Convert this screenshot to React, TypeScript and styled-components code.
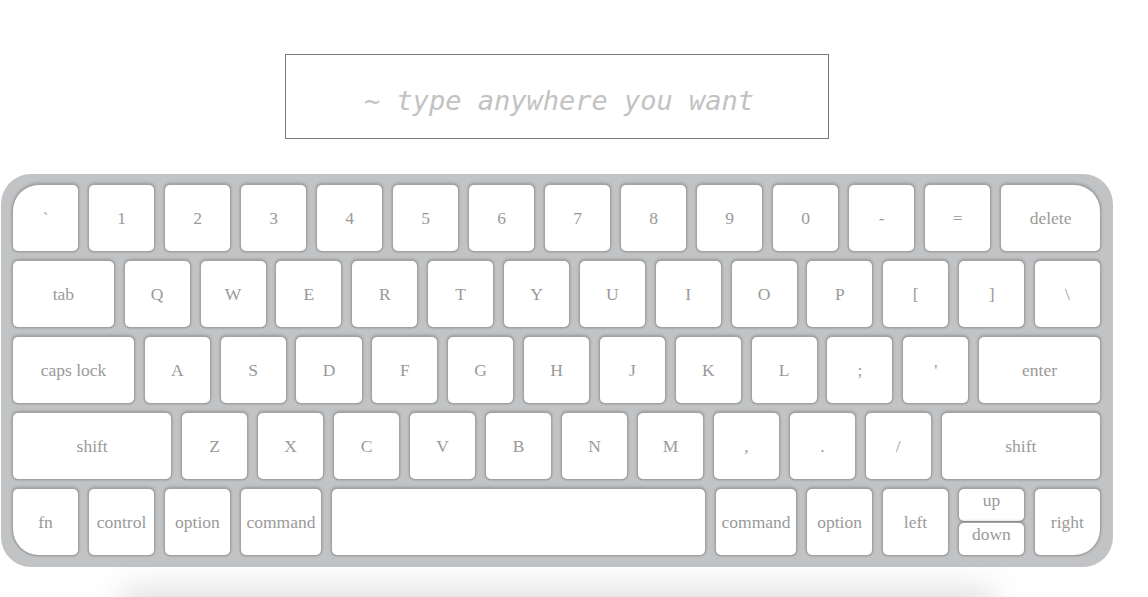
import React from "react";
import styled, { createGlobalStyle, css } from "styled-components";

const Global = createGlobalStyle`
  html, body { margin: 0; padding: 0; background: #fff; overflow: hidden; }
  body { font-family: "Liberation Serif", "Times New Roman", serif; }
`;

const Page = styled.div`
  width: 1114px;
  height: 597px;
  overflow: hidden;
  display: flex;
  flex-direction: column;
  align-items: center;
  padding-top: 54px;
  box-sizing: border-box;
`;

const TypeBox = styled.div`
  box-sizing: border-box;
  width: 544px;
  height: 85px;
  flex-shrink: 0;
  border: 1px solid #7a7a7a;
  display: flex;
  align-items: center;
  justify-content: center;
  font-family: "DejaVu Sans Mono", "Liberation Mono", monospace;
  font-style: italic;
  font-size: 27px;
  color: #c2c2c2;
  padding-top: 7px;
  padding-left: 4px;
`;

const Board = styled.div`
  box-sizing: border-box;
  flex-shrink: 0;
  margin-top: 35px;
  margin-left: 0;
  width: 1112px;
  height: 393px;
  padding: 11px 13px 12px 12px;
  background: #c2c3c5;
  border-radius: 30px;
  display: flex;
  flex-direction: column;
  gap: 10px;
`;

const Row = styled.div`
  display: flex;
  gap: 10.8px;
  height: 66px;
`;

type Corner = "tl" | "tr" | "bl" | "br" | undefined;

const keyFace = css`
  box-sizing: border-box;
  background: #fff;
  border-radius: 5px;
  box-shadow: 0 0 0 1px #a3a3a3, 0 -1px 3px 1px rgba(0, 0, 0, 0.22),
    0 1px 2px rgba(0, 0, 0, 0.25);
  color: #9a9a9a;
  font-family: "Liberation Serif", "Times New Roman", serif;
  font-size: 17.5px;
  display: flex;
  align-items: center;
  justify-content: center;
  white-space: nowrap;
`;

const Key = styled.div<{ $u: number; $corner?: Corner }>`
  ${keyFace};
  flex: ${(p) => p.$u} ${(p) => p.$u} 0;
  min-width: 0;
  ${(p) => p.$corner === "tl" && "border-top-left-radius: 26px;"}
  ${(p) => p.$corner === "tr" && "border-top-right-radius: 26px;"}
  ${(p) => p.$corner === "bl" && "border-bottom-left-radius: 26px;"}
  ${(p) => p.$corner === "br" && "border-bottom-right-radius: 26px;"}
`;

const Split = styled.div`
  flex: 1 1 0;
  display: flex;
  flex-direction: column;
  gap: 2px;
`;

const Half = styled.div`
  ${keyFace};
  flex: 1;
  align-items: flex-start;
  line-height: 1;
  padding-top: 3px;
`;

const Shadow = styled.div`
  flex-shrink: 0;
  width: 880px;
  height: 40px;
  margin-top: 22px;
  margin-left: 2px;
  background: rgba(0, 0, 0, 0.13);
  filter: blur(16px);
  border-radius: 20px;
`;

type K = [string, number, Corner?];

const rows: K[][] = [
  [
    ["`", 1, "tl"], ["1", 1], ["2", 1], ["3", 1], ["4", 1], ["5", 1], ["6", 1],
    ["7", 1], ["8", 1], ["9", 1], ["0", 1], ["-", 1], ["=", 1], ["delete", 1.52, "tr"],
  ],
  [
    ["tab", 1.55], ["Q", 1], ["W", 1], ["E", 1], ["R", 1], ["T", 1], ["Y", 1],
    ["U", 1], ["I", 1], ["O", 1], ["P", 1], ["[", 1], ["]", 1], ["\\", 1],
  ],
  [
    ["caps lock", 1.86], ["A", 1], ["S", 1], ["D", 1], ["F", 1], ["G", 1], ["H", 1],
    ["J", 1], ["K", 1], ["L", 1], [";", 1], ["'", 1], ["enter", 1.86],
  ],
  [
    ["shift", 2.43], ["Z", 1], ["X", 1], ["C", 1], ["V", 1], ["B", 1], ["N", 1],
    ["M", 1], [",", 1], [".", 1], ["/", 1], ["shift", 2.43],
  ],
];

const bottom: K[] = [
  ["fn", 1, "bl"], ["control", 1], ["option", 1], ["command", 1.23], ["", 5.73],
  ["command", 1.23], ["option", 1], ["left", 1],
];

export default function App() {
  return (
    <>
      <Global />
      <Page>
        <TypeBox>~ type anywhere you want</TypeBox>
        <Board>
          {rows.map((r, i) => (
            <Row key={i}>
              {r.map(([label, u, c], j) => (
                <Key key={j} $u={u} $corner={c}>
                  {label}
                </Key>
              ))}
            </Row>
          ))}
          <Row>
            {bottom.map(([label, u, c], j) => (
              <Key key={j} $u={u} $corner={c}>
                {label}
              </Key>
            ))}
            <Split>
              <Half>up</Half>
              <Half>down</Half>
            </Split>
            <Key $u={1} $corner="br">
              right
            </Key>
          </Row>
        </Board>
        <Shadow />
      </Page>
    </>
  );
}
